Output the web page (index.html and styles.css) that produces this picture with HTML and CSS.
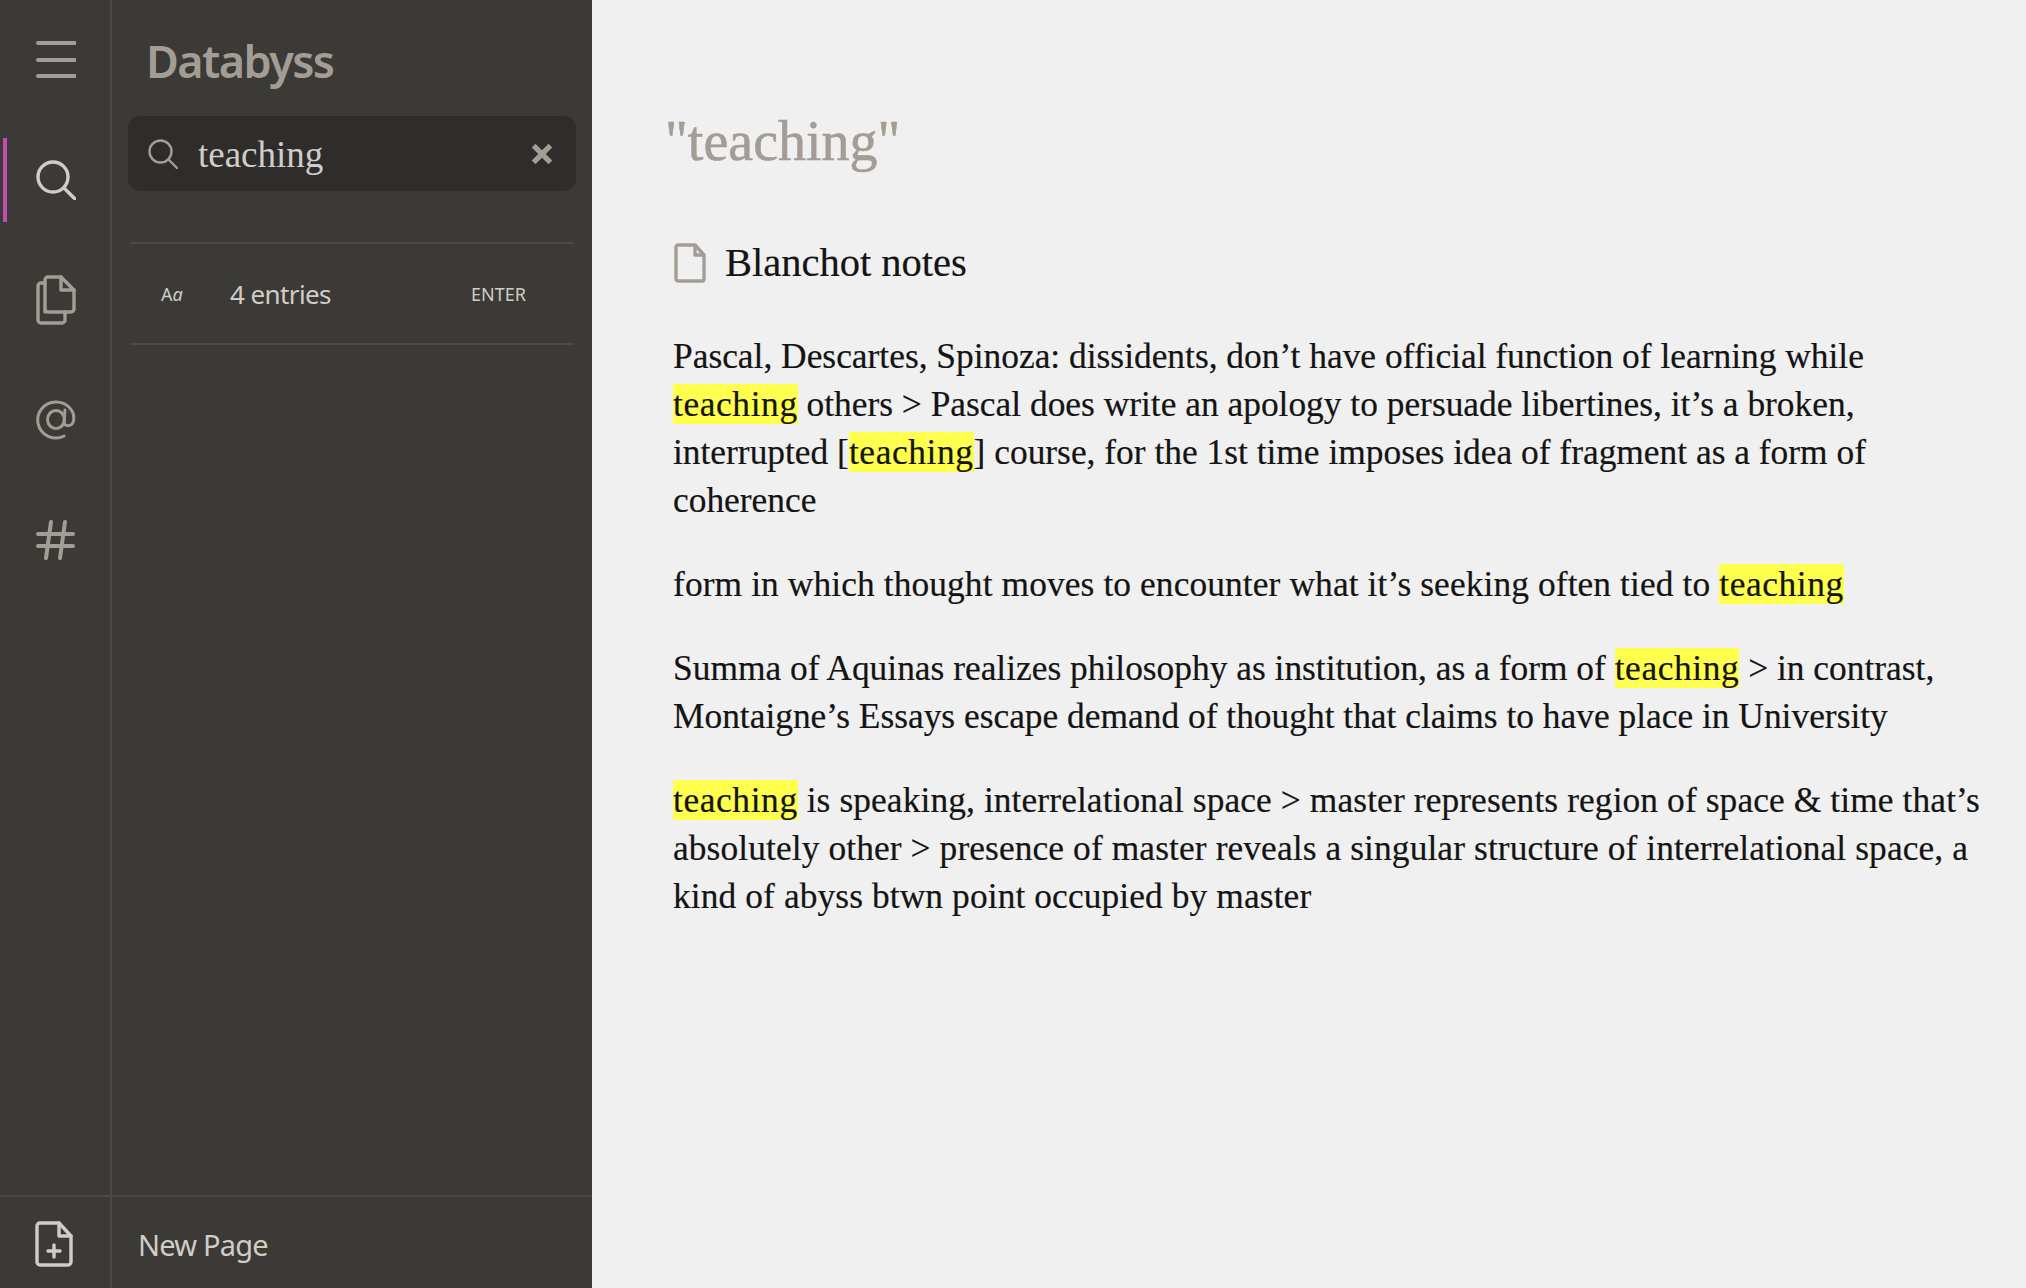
FILE: index.html
```html
<!DOCTYPE html>
<html lang="en">
  <head>
    <meta charset="UTF-8" />
    <title>Databyss</title>
    <link rel="stylesheet" href="styles.css">
  </head>
  <body>
    <aside class="sidebar">
      <div class="sidebar-top">
        <nav class="rail">
          <div class="rail-item">
            <svg class="rail-icon" viewBox="0 0 40 40" fill="none" stroke="#a39d95" stroke-width="4" stroke-linecap="round"><path d="M2 3h37M2 20h37M2 36h37"/></svg>
          </div>
          <div class="rail-item active">
            <svg class="rail-icon" viewBox="0 0 40 40" fill="none" stroke="#d0cdc8" stroke-width="3.4" stroke-linecap="round"><circle cx="17" cy="17" r="15"/><path d="M28 28l11 11"/></svg>
          </div>
          <div class="rail-item">
            <svg class="rail-icon docs" viewBox="0 0 40 50" fill="none" stroke="#a39d95" stroke-width="3.4" stroke-linejoin="round" stroke-linecap="round"><path d="M9 37V5a3 3 0 0 1 3-3h13l13 13v19a3 3 0 0 1-3 3H12a3 3 0 0 1-3-3z"/><path d="M25 2v13h13"/><path d="M9 8H5a3 3 0 0 0-3 3v34a3 3 0 0 0 3 3h21a3 3 0 0 0 3-3v-8"/></svg>
          </div>
          <div class="rail-item">
            <svg class="rail-icon" viewBox="0 0 40 40" fill="none" stroke="#a39d95" stroke-width="3" stroke-linecap="round"><ellipse cx="20" cy="19.500" rx="8.500" ry="9"/><path d="M29 10l-1 12c0 5 8 5 9.500-1C39.500 11 31 2 20 2a18 18 0 1 0 8 34"/></svg>
          </div>
          <div class="rail-item">
            <svg class="rail-icon" viewBox="0 0 40 40" fill="none" stroke="#a39d95" stroke-width="4" stroke-linecap="round"><path d="M15 2L10 38M29 2l-5 36M2 14h35M2 26h35"/></svg>
          </div>
        </nav>
        <section class="panel">
          <h2 class="brand">Databyss</h2>
          <div class="search-box">
            <svg class="search-icon" viewBox="0 0 30 30" fill="none" stroke="#a39d95" stroke-width="2.400" stroke-linecap="round"><circle cx="12.500" cy="12.500" r="11"/><path d="M21 21l8 8"/></svg>
            <span class="search-text">teaching</span>
            <svg class="clear-icon" viewBox="0 0 20 20" fill="none" stroke="#a39d95" stroke-width="4.400"><path d="M3 3l14 14M17 3L3 17"/></svg>
          </div>
          <div class="result-row">
            <span class="result-type">A<i>a</i></span>
            <span class="result-count">4 entries</span>
            <span class="result-key">ENTER</span>
          </div>
        </section>
      </div>
      <div class="sidebar-bottom">
        <div class="new-icon-cell">
          <svg class="new-icon" viewBox="0 0 38 46" fill="none" stroke="#d0cdc8" stroke-width="3.400" stroke-linejoin="round" stroke-linecap="round"><path d="M2 5a3 3 0 0 1 3-3h19l12 13v26a3 3 0 0 1-3 3H5a3 3 0 0 1-3-3z"/><path d="M24 2v13h12"/><path d="M19 24v12M13 30h12"/></svg>
        </div>
        <span class="new-label">New Page</span>
      </div>
    </aside>

    <main class="content">
      <h1 class="query">"teaching"</h1>
      <div class="source">
        <svg class="source-icon" viewBox="0 0 32 40" fill="none" stroke="#a39d95" stroke-width="3.400" stroke-linejoin="round"><path d="M2 4a2 2 0 0 1 2-2h17l9 10v24a2 2 0 0 1-2 2H4a2 2 0 0 1-2-2z"/><path d="M21 2v10h9"/></svg>
        <span class="source-title">Blanchot notes</span>
      </div>
      <p class="entry">Pascal, Descartes, Spinoza: dissidents, don’t have official function of learning while<br><mark>teaching</mark> others &gt; Pascal does write an apology to persuade libertines, it’s a broken,<br>interrupted [<mark>teaching</mark>] course, for the 1st time imposes idea of fragment as a form of<br>coherence</p>
      <p class="entry entry-wide">form in which thought moves to encounter what it’s seeking often tied to <mark>teaching</mark></p>
      <p class="entry">Summa of Aquinas realizes philosophy as institution, as a form of <mark>teaching</mark> &gt; in contrast,<br>Montaigne’s Essays escape demand of thought that claims to have place in University</p>
      <p class="entry entry-wide"><mark>teaching</mark> is speaking, interrelational space &gt; master represents region of space &amp; time that’s<br>absolutely other &gt; presence of master reveals a singular structure of interrelational space, a<br>kind of abyss btwn point occupied by master</p>
    </main>
  </body>
</html>
```

FILE: styles.css
```css
* {
  box-sizing: border-box;
  margin: 0;
  padding: 0;
}

body {
  display: flex;
  height: 100vh;
  overflow: hidden;
  background-color: #f0f0f0;
  font-family: "Liberation Serif", serif;
  color: #141414;
}

/* Sidebar */
.sidebar {
  width: 592px;
  flex-shrink: 0;
  display: flex;
  flex-direction: column;
  background-color: #3b3a36;
  font-family: "Noto Sans", sans-serif;
}

.sidebar-top {
  flex: 1;
  display: flex;
}

.rail {
  width: 112px;
  border-right: 2px solid #4f4944;
  padding-left: 2px;
}

.rail-item {
  height: 120px;
  display: flex;
  align-items: center;
  justify-content: center;
  position: relative;
}

.rail-item.active::before {
  content: "";
  position: absolute;
  left: 1px;
  top: 18px;
  width: 4px;
  height: 84px;
  background-color: #c44db0;
}

.rail-icon {
  width: 40px;
  height: 40px;
}

.rail-icon.docs {
  height: 50px;
}

.panel {
  flex: 1;
  padding: 0 16px;
}

.brand {
  height: 116px;
  padding: 35px 0 0 18px;
  font-size: 45px;
  line-height: 52px;
  font-weight: 600;
  color: #a39d95;
  letter-spacing: -1.6px;
}

.search-box {
  height: 75px;
  display: flex;
  align-items: center;
  padding: 0 22px 0 20px;
  border-radius: 12px;
  background-color: #2e2d2b;
}

.search-icon {
  width: 30px;
  height: 30px;
}

.search-text {
  flex: 1;
  margin: 2px 0 0 20px;
  font-family: "Liberation Serif", serif;
  font-size: 37px;
  color: #d0cdc8;
}

.clear-icon {
  width: 24px;
  height: 24px;
}

.result-row {
  height: 103px;
  margin: 51px 2px 0;
  display: flex;
  align-items: center;
  border-top: 2px solid #4f4944;
  border-bottom: 2px solid #4f4944;
  color: #d0cdc8;
}

.result-type {
  width: 100px;
  padding-left: 31px;
  font-size: 18px;
}

.result-count {
  flex: 1;
  font-size: 26px;
  letter-spacing: -0.6px;
}

.result-key {
  padding-right: 48px;
  font-size: 18px;
}

.sidebar-bottom {
  height: 93px;
  display: flex;
  border-top: 2px solid #4f4944;
}

.new-icon-cell {
  width: 112px;
  display: flex;
  align-items: center;
  padding: 2px 0 0 35px;
  border-right: 2px solid #4f4944;
}

.new-icon {
  width: 38px;
  height: 46px;
}

.new-label {
  align-self: center;
  margin: 4px 0 0 26px;
  font-size: 29px;
  letter-spacing: -0.8px;
  color: #d0cdc8;
}

/* Contenu principal */
.content {
  flex: 1;
  padding: 105px 0 0 81px;
}

.query {
  margin-left: -8px;
  font-size: 56px;
  line-height: 72px;
  font-weight: 400;
  color: #a39d95;
  -webkit-text-stroke: 0.6px #a39d95;
}

.source {
  display: flex;
  align-items: center;
  margin: 62px 0 46px;
  padding-left: 1px;
}

.source-icon {
  width: 32px;
  height: 40px;
}

.source-title {
  margin-left: 19px;
  font-size: 40.5px;
  -webkit-text-stroke: 0.2px #141414;
}

.entry {
  font-size: 35.4px;
  line-height: 48px;
  white-space: nowrap;
  margin-bottom: 36px;
  -webkit-text-stroke: 0.2px #141414;
}

.entry-wide {
  letter-spacing: 0.1px;
}

mark {
  background-color: #ffff4d;
  color: inherit;
  letter-spacing: 0.6px;
}
```
